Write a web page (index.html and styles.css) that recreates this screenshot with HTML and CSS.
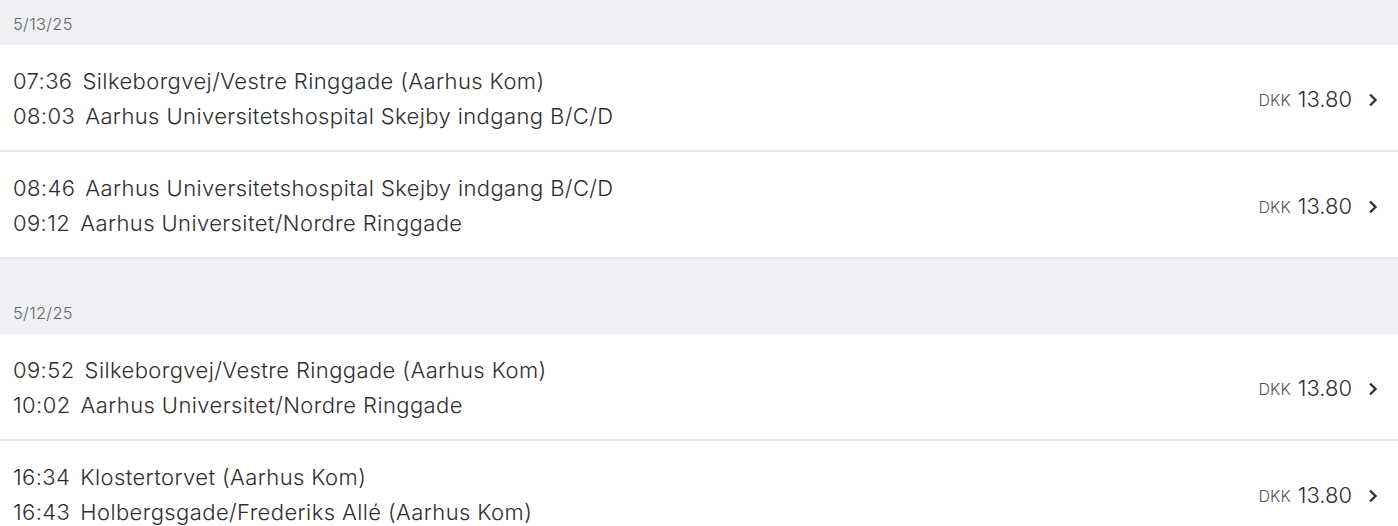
FILE: index.html
```html
<!DOCTYPE html>
<html>
<head>
<meta charset="utf-8">
<link rel="stylesheet" href="styles.css">
</head>
<body>
<div class="list">
  <div class="date first">5/13/25</div>
  <div class="trip">
    <div class="stops">
      <div class="stop"><span class="time">07:36</span><span>Silkeborgvej/Vestre Ringgade (Aarhus Kom)</span></div>
      <div class="stop"><span class="time">08:03</span><span>Aarhus Universitetshospital Skejby indgang B/C/D</span></div>
    </div>
    <div class="price"><span class="cur">DKK</span><span class="amt">13.80</span><svg class="chev" width="10" height="14" viewBox="0 0 10 14"><path d="M2 1.5 L7.5 7 L2 12.5" fill="none" stroke="#333" stroke-width="2.4"/></svg></div>
  </div>
  <div class="trip">
    <div class="stops">
      <div class="stop"><span class="time">08:46</span><span>Aarhus Universitetshospital Skejby indgang B/C/D</span></div>
      <div class="stop"><span class="time">09:12</span><span>Aarhus Universitet/Nordre Ringgade</span></div>
    </div>
    <div class="price"><span class="cur">DKK</span><span class="amt">13.80</span><svg class="chev" width="10" height="14" viewBox="0 0 10 14"><path d="M2 1.5 L7.5 7 L2 12.5" fill="none" stroke="#333" stroke-width="2.4"/></svg></div>
  </div>
  <div class="date second">5/12/25</div>
  <div class="trip">
    <div class="stops">
      <div class="stop"><span class="time">09:52</span><span>Silkeborgvej/Vestre Ringgade (Aarhus Kom)</span></div>
      <div class="stop"><span class="time">10:02</span><span>Aarhus Universitet/Nordre Ringgade</span></div>
    </div>
    <div class="price"><span class="cur">DKK</span><span class="amt">13.80</span><svg class="chev" width="10" height="14" viewBox="0 0 10 14"><path d="M2 1.5 L7.5 7 L2 12.5" fill="none" stroke="#333" stroke-width="2.4"/></svg></div>
  </div>
  <div class="trip">
    <div class="stops">
      <div class="stop"><span class="time">16:34</span><span>Klostertorvet (Aarhus Kom)</span></div>
      <div class="stop"><span class="time">16:43</span><span>Holbergsgade/Frederiks Allé (Aarhus Kom)</span></div>
    </div>
    <div class="price"><span class="cur">DKK</span><span class="amt">13.80</span><svg class="chev" width="10" height="14" viewBox="0 0 10 14"><path d="M2 1.5 L7.5 7 L2 12.5" fill="none" stroke="#333" stroke-width="2.4"/></svg></div>
  </div>
</div>
</body>
</html>
```
FILE: styles.css
```css
html, body {
  margin: 0;
  padding: 0;
  background: #ffffff;
  font-family: "Inter", "Noto Sans", sans-serif;
  color: #333333;
}
.list {
  display: flex;
  flex-direction: column;
}
.date {
  background: #eff0f4;
  color: #666666;
  font-size: 16.5px;
  letter-spacing: 0.3px;
  font-weight: 300;
  padding-left: 13px;
  display: flex;
  align-items: flex-end;
  box-sizing: border-box;
}
.date.first {
  height: 45px;
  padding-bottom: 11px;
}
.date.second {
  height: 75px;
  padding-bottom: 11px;
}
.trip {
  height: 107px;
  box-sizing: border-box;
  border-bottom: 2px solid #e8e8ea;
  display: flex;
  align-items: center;
  padding: 2px 20px 0 13px;
}
.stops {
  flex: 1;
  display: flex;
  flex-direction: column;
}
.stop {
  font-size: 22px;
  font-weight: 300;
  letter-spacing: 0.4px;
  line-height: 35px;
  color: #2e2e2e;
}
.time {
  margin-right: 10px;
}
.price {
  display: flex;
  align-items: center;
}
.cur {
  font-size: 16px;
  font-weight: 300;
  color: #555555;
  margin-right: 7px;
  margin-top: 3px;
}
.amt {
  font-size: 22px;
  font-weight: 300;
  color: #2e2e2e;
  margin-right: 16px;
}
.chev {
  display: block;
  margin-top: 2px;
}
```
